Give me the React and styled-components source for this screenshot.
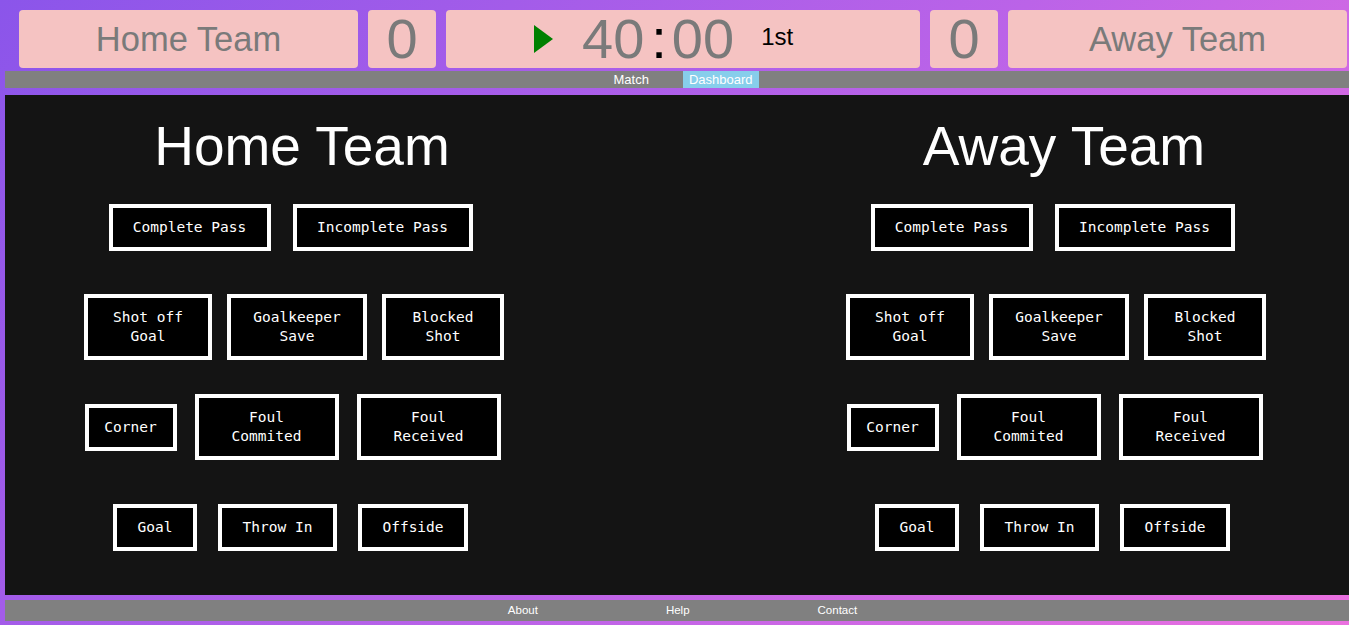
import React from "react";
import styled, { createGlobalStyle } from "styled-components";

const GlobalStyle = createGlobalStyle`
  html, body {
    margin: 0;
    padding: 0;
    height: 100%;
  }
  body {
    background: linear-gradient(130deg, #8b55ea 0%, #bb63e8 55%, #ea70df 100%);
    font-family: "Liberation Sans", Arial, sans-serif;
    overflow: hidden;
  }
  #root {
    min-height: 100vh;
  }
`;

const Page = styled.div`
  padding-top: 10px;
  display: flex;
  flex-direction: column;
`;

const ScoreBar = styled.header`
  display: flex;
  gap: 10px;
  margin-left: 19px;
`;

const Box = styled.div`
  width: ${(p) => p.$w}px;
  height: 58px;
  background: #f5c3c2;
  border-radius: 4px;
  display: flex;
  align-items: center;
  justify-content: center;
  color: #7a7a7a;
  line-height: 58px;
  flex: none;
`;

const TeamName = styled.span`
  font-size: 34.5px;
`;

const Score = styled.span`
  font-size: 56px;
`;

const TimerBox = styled(Box)`
  justify-content: flex-start;
  padding-left: 88px;
  box-sizing: border-box;
`;

const PlayIcon = styled.svg`
  width: 19px;
  height: 28px;
  margin-right: 29px;
  flex: none;
`;

const Digits = styled.span`
  font-size: 56px;
`;

const Colon = styled.span`
  font-size: 56px;
  color: #000;
  margin: 0 5px 0 7px;
`;

const Period = styled.span`
  font-size: 24px;
  line-height: 28px;
  color: #000;
  margin-left: 27px;
  margin-bottom: 4px;
`;

const NavBar = styled.nav`
  margin: 3px 0 0 5px;
  height: 17px;
  background: #808080;
  display: flex;
  justify-content: center;
  gap: 28px;
  padding-left: 12px;
`;

const NavLink = styled.a`
  font-size: 13px;
  line-height: 17px;
  color: #fff;
  padding: 0 6px;
  background: ${(p) => (p.$active ? "#87ceeb" : "transparent")};
  text-decoration: none;
  cursor: pointer;
`;

const Panel = styled.main`
  margin: 7px 0 0 5px;
  background: #141414;
  display: grid;
  grid-template-columns: 520px 520px;
  column-gap: 242px;
  padding: 20px 0 18px 37px;
`;

const TeamColumn = styled.section`
  display: flex;
  flex-direction: column;
`;

const TeamTitle = styled.h1`
  margin: 0;
  font-size: 55px;
  line-height: 62px;
  font-weight: normal;
  color: #fff;
  text-align: center;
`;

const ButtonRow = styled.div`
  height: 100px;
  display: flex;
  justify-content: center;
  align-items: center;
  gap: ${(p) => p.$gap}px;
  padding-right: ${(p) => p.$shift}px;
`;

const EventButton = styled.button`
  width: ${(p) => p.$w}px;
  flex: none;
  box-sizing: border-box;
  background: #000;
  color: #fff;
  border: 4px solid #fff;
  padding: 10px 0;
  margin: 0;
  font-family: "DejaVu Sans Mono", "Liberation Mono", monospace;
  font-size: 14.5px;
  line-height: 19px;
  text-align: center;
  cursor: pointer;
`;

const Footer = styled.footer`
  margin: 5px 0 0 5px;
  height: 21px;
  background: #808080;
  display: flex;
  justify-content: center;
  gap: 128px;
  padding-left: 11px;
`;

const FooterLink = styled.a`
  font-size: 11.5px;
  line-height: 21px;
  color: #fff;
  text-decoration: none;
`;

const rows = [
  {
    gap: 22,
    shift: 23,
    buttons: [
      { w: 162, lines: ["Complete Pass"] },
      { w: 180, lines: ["Incomplete Pass"] },
    ],
  },
  {
    gap: 15,
    shift: 16,
    buttons: [
      { w: 128, lines: ["Shot off", "Goal"] },
      { w: 140, lines: ["Goalkeeper", "Save"] },
      { w: 122, lines: ["Blocked", "Shot"] },
    ],
  },
  {
    gap: 18,
    shift: 19,
    buttons: [
      { w: 92, lines: ["Corner"] },
      { w: 144, lines: ["Foul", "Commited"] },
      { w: 144, lines: ["Foul", "Received"] },
    ],
  },
  {
    gap: 21,
    shift: 23,
    buttons: [
      { w: 84, lines: ["Goal"] },
      { w: 119, lines: ["Throw In"] },
      { w: 110, lines: ["Offside"] },
    ],
  },
];

function Team({ name }) {
  return (
    <TeamColumn>
      <TeamTitle>{name}</TeamTitle>
      {rows.map((row, i) => (
        <ButtonRow key={i} $gap={row.gap} $shift={row.shift}>
          {row.buttons.map((b, j) => (
            <EventButton key={j} $w={b.w}>
              {b.lines.map((l, k) => (
                <React.Fragment key={k}>
                  {k > 0 && <br />}
                  {l}
                </React.Fragment>
              ))}
            </EventButton>
          ))}
        </ButtonRow>
      ))}
    </TeamColumn>
  );
}

export default function App() {
  return (
    <>
      <GlobalStyle />
      <Page>
        <ScoreBar>
          <Box $w={339}>
            <TeamName>Home Team</TeamName>
          </Box>
          <Box $w={68}>
            <Score>0</Score>
          </Box>
          <TimerBox $w={474}>
            <PlayIcon viewBox="0 0 19 28">
              <polygon points="0,0 19,14 0,28" fill="#008000" />
            </PlayIcon>
            <Digits>40</Digits>
            <Colon>:</Colon>
            <Digits>00</Digits>
            <Period>1st</Period>
          </TimerBox>
          <Box $w={68}>
            <Score>0</Score>
          </Box>
          <Box $w={339}>
            <TeamName>Away Team</TeamName>
          </Box>
        </ScoreBar>
        <NavBar>
          <NavLink>Match</NavLink>
          <NavLink $active>Dashboard</NavLink>
        </NavBar>
        <Panel>
          <Team name="Home Team" />
          <Team name="Away Team" />
        </Panel>
        <Footer>
          <FooterLink>About</FooterLink>
          <FooterLink>Help</FooterLink>
          <FooterLink>Contact</FooterLink>
        </Footer>
      </Page>
    </>
  );
}
